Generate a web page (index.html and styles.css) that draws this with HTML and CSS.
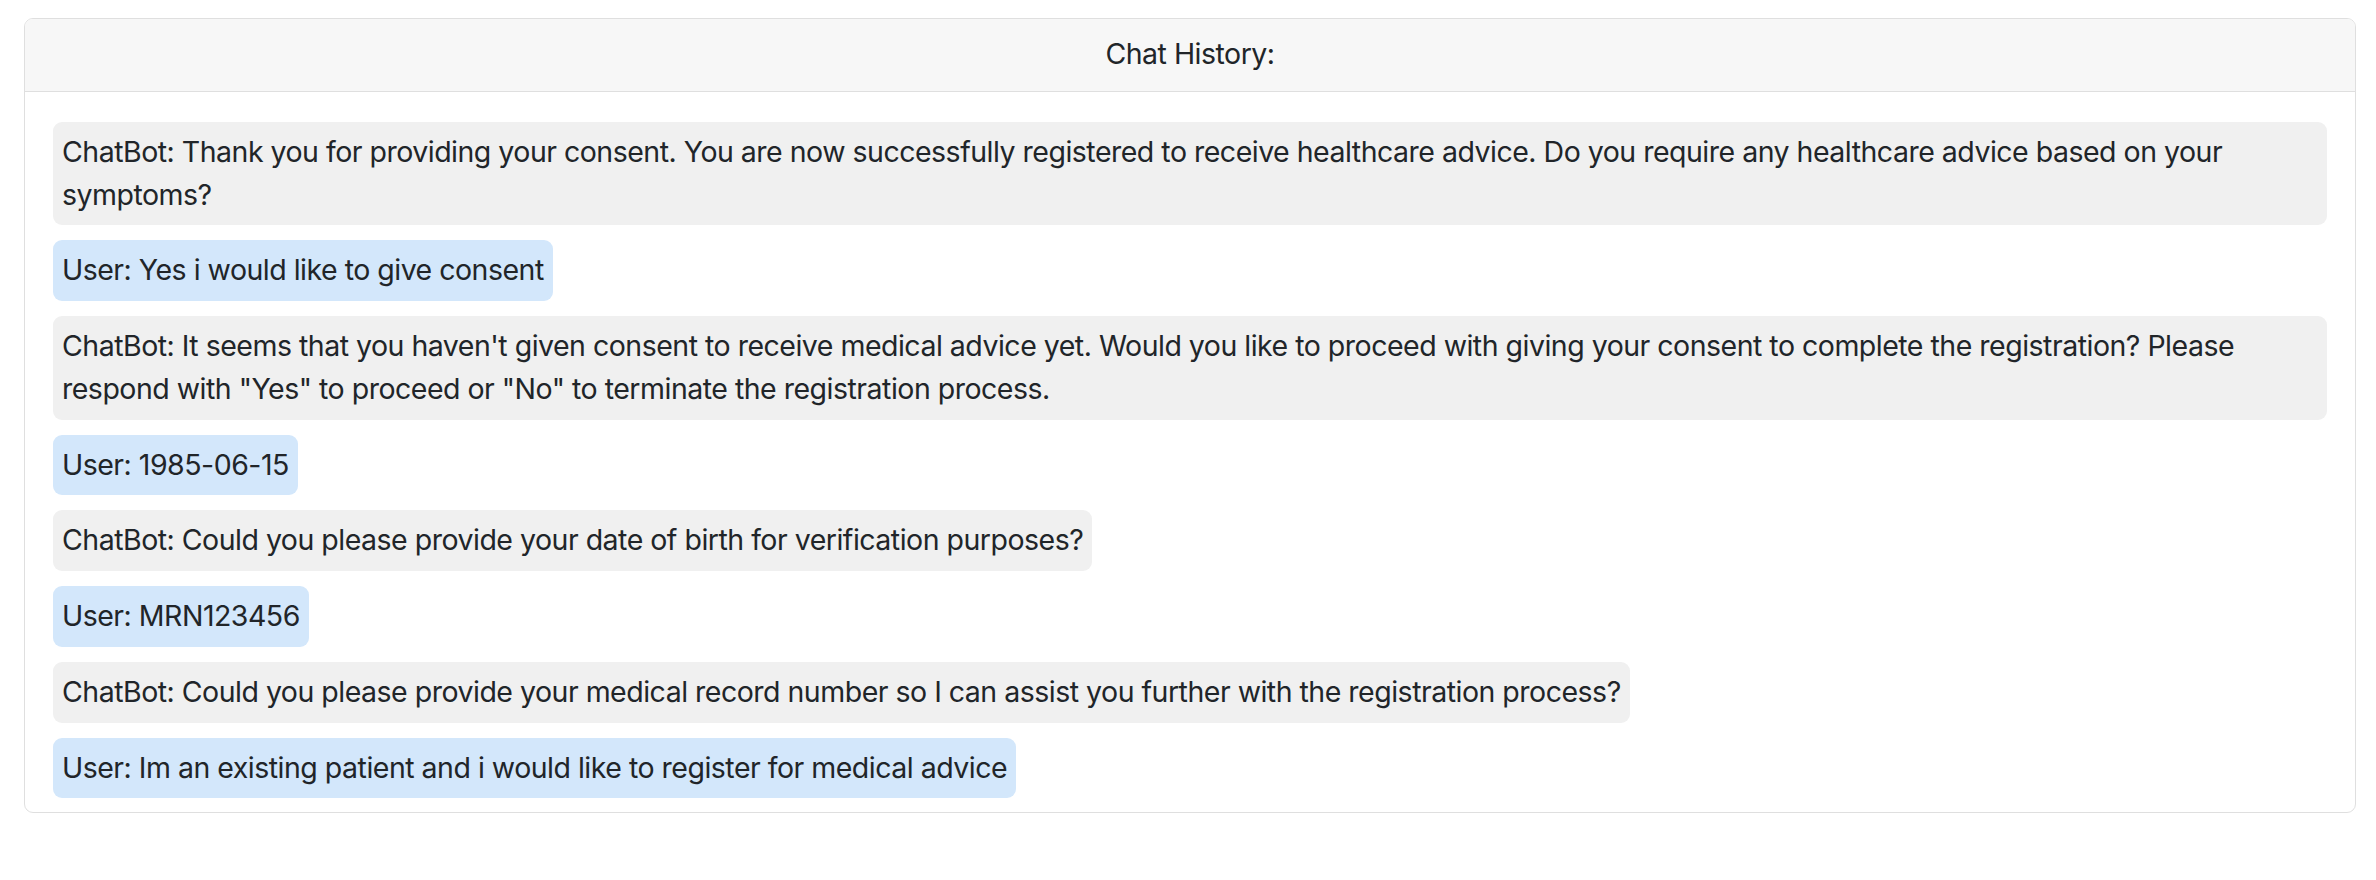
FILE: index.html
```html
<!DOCTYPE html>
<html lang="en">
<head>
<meta charset="utf-8">
<title>Chat History</title>
<link rel="stylesheet" href="styles.css">
</head>
<body>
<div class="card">
  <div class="card-header">Chat History:</div>
  <div class="card-body">
    <div class="msg bot">ChatBot: Thank you for providing your consent. You are now successfully registered to receive healthcare advice. Do you require any healthcare advice based on your symptoms?</div>
    <div class="msg user">User: Yes i would like to give consent</div>
    <div class="msg bot">ChatBot: It seems that you haven't given consent to receive medical advice yet. Would you like to proceed with giving your consent to complete the registration? Please respond with "Yes" to proceed or "No" to terminate the registration process.</div>
    <div class="msg user">User: 1985-06-15</div>
    <div class="msg bot">ChatBot: Could you please provide your date of birth for verification purposes?</div>
    <div class="msg user">User: MRN123456</div>
    <div class="msg bot">ChatBot: Could you please provide your medical record number so I can assist you further with the registration process?</div>
    <div class="msg user">User: Im an existing patient and i would like to register for medical advice</div>
  </div>
</div>
</body>
</html>
```

FILE: styles.css
```css
html, body {
  margin: 0;
  padding: 0;
  background: #ffffff;
}

body {
  font-family: Inter, "Noto Sans", "Liberation Sans", sans-serif;
  font-size: 28.5px;
  line-height: 1.5;
  letter-spacing: -0.5px;
  color: #212529;
}

.card {
  margin: 18px 20px 0 24px;
  border: 1px solid #dfdfdf;
  border-radius: 9px;
  overflow: hidden;
  background: #ffffff;
}

.card-header {
  background: #f7f7f7;
  border-bottom: 1px solid #dfdfdf;
  padding: 14px 28px 15px;
  text-align: center;
}

.card-body {
  padding: 30px 28px 14px;
  display: flex;
  flex-direction: column;
  align-items: flex-start;
  gap: 15px;
}

.msg {
  padding: 9px;
  border-radius: 9px;
}

.bot {
  background: #f0f0f0;
}

.user {
  background: #d3e7fb;
}
```
